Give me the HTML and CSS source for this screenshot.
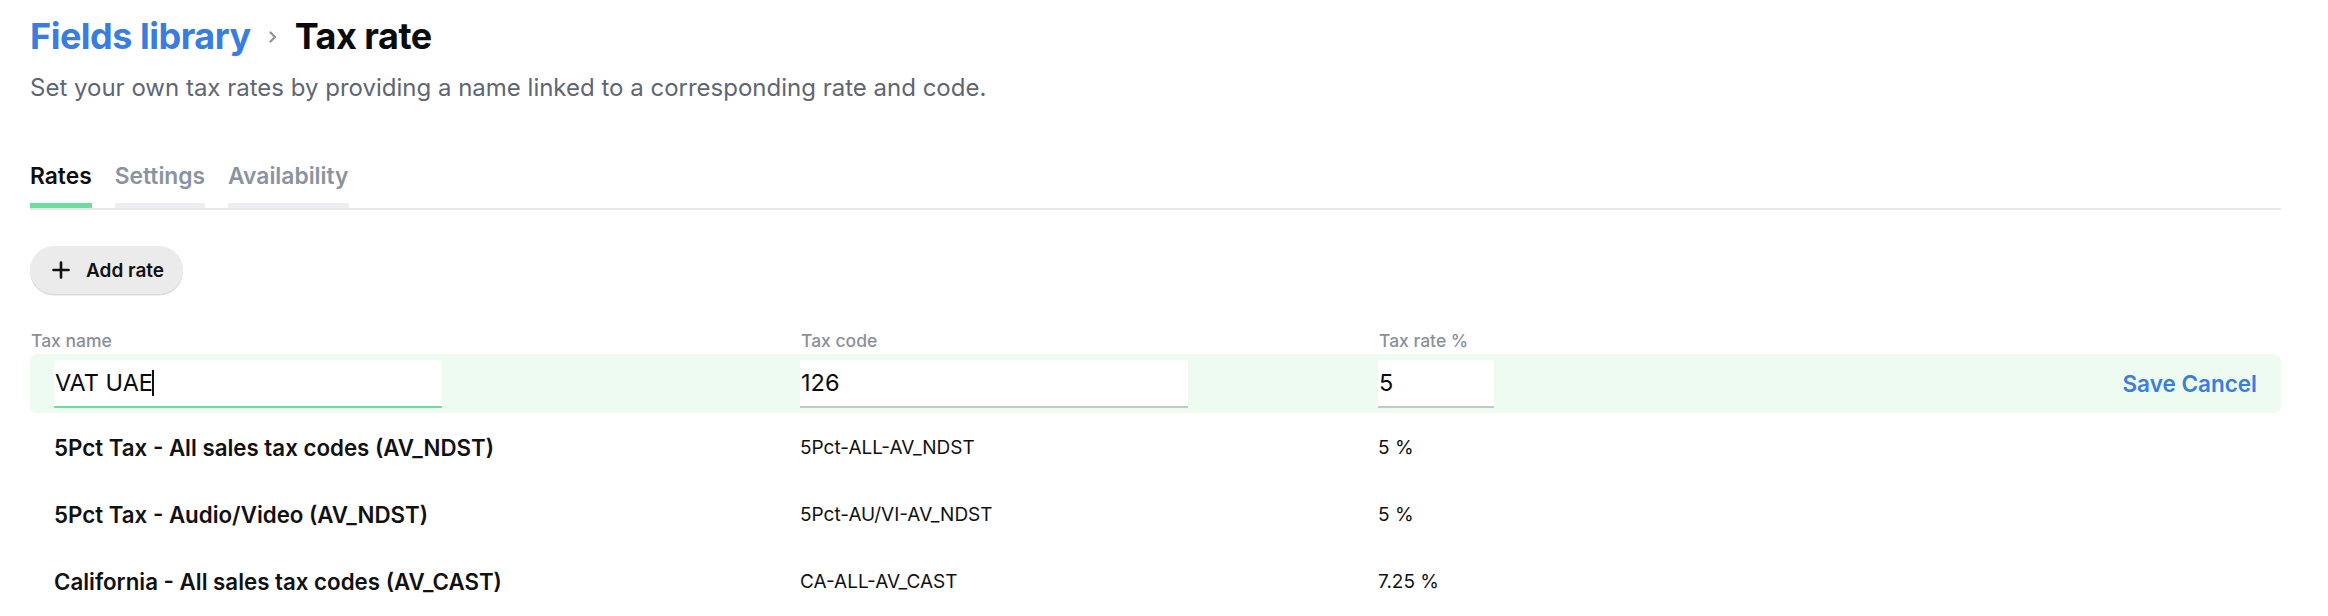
FILE: index.html
```html
<!DOCTYPE html>
<html lang="en">
<head>
<meta charset="utf-8">
<title>Tax rate</title>
<link rel="stylesheet" href="styles.css">
</head>
<body>
<div class="page">
  <header class="head">
    <h1 class="crumbs">
      <span class="crumb-link">Fields library</span>
      <svg class="chev" width="10" height="16" viewBox="0 0 10 16"><path d="M2.5 3.5 L7 8 L2.5 12.5" fill="none" stroke="#8d929b" stroke-width="2.2" stroke-linecap="round" stroke-linejoin="round"/></svg>
      <span class="crumb-current">Tax rate</span>
    </h1>
    <p class="subtitle">Set your own tax rates by providing a name linked to a corresponding rate and code.</p>
  </header>

  <nav class="tabs">
    <div class="tab active">Rates</div>
    <div class="tab">Settings</div>
    <div class="tab">Availability</div>
  </nav>

  <div class="toolbar">
    <button class="add-btn">
      <svg width="18" height="18" viewBox="0 0 18 18"><path d="M9 1.5 V16.5 M1.5 9 H16.5" stroke="#111" stroke-width="2.6" stroke-linecap="round"/></svg>
      <span>Add rate</span>
    </button>
  </div>

  <div class="table">
    <div class="thead">
      <div>Tax name</div>
      <div>Tax code</div>
      <div>Tax rate %</div>
    </div>

    <div class="row edit">
      <div class="field w-name active-field"><span>VAT UAE</span><span class="caret"></span></div>
      <div class="field w-code"><span>126</span></div>
      <div class="cell-rate">
        <div class="field w-rate"><span>5</span></div>
        <div class="actions"><span>Save</span> <span>Cancel</span></div>
      </div>
    </div>

    <div class="rows">
      <div class="row">
        <div class="name">5Pct Tax - All sales tax codes (AV_NDST)</div>
        <div class="code">5Pct-ALL-AV_NDST</div>
        <div class="code">5 %</div>
      </div>
      <div class="row">
        <div class="name">5Pct Tax - Audio/Video (AV_NDST)</div>
        <div class="code">5Pct-AU/VI-AV_NDST</div>
        <div class="code">5 %</div>
      </div>
      <div class="row">
        <div class="name">California - All sales tax codes (AV_CAST)</div>
        <div class="code">CA-ALL-AV_CAST</div>
        <div class="code">7.25 %</div>
      </div>
    </div>
  </div>
</div>
</body>
</html>
```

FILE: styles.css
```css
* { box-sizing: border-box; }
html, body { margin: 0; padding: 0; background: #fff; }
body {
  font-family: Inter, "Noto Sans", "Liberation Sans", sans-serif;
  color: #111;
  overflow: hidden;
}
.page {
  padding: 14px 47px 0 30px;
}
.crumbs {
  margin: 0;
  display: flex;
  align-items: center;
  gap: 17px;
  font-size: 36px;
  line-height: 44px;
  font-weight: 700;
  letter-spacing: -0.5px;
}
.crumb-link { color: #3b7ddd; }
.crumb-current { color: #0b0b0b; }
.chev { margin-top: 2px; }
.subtitle {
  margin: 15px 0 0;
  font-size: 24px;
  line-height: 30px;
  color: #5f6672;
}
.tabs {
  margin-top: 59px;
  display: flex;
  gap: 23px;
  border-bottom: 2px solid #e8e8e8;
}
.tab {
  font-size: 22.8px;
  line-height: 28px;
  font-weight: 600;
  color: #8b93a0;
  padding-bottom: 13px;
  border-bottom: 5px solid #eceef1;
}
.tab.active {
  color: #0d0d0d;
  border-bottom-color: #6ddc9e;
}
.toolbar {
  margin-top: 36px;
  display: flex;
}
.add-btn {
  display: flex;
  align-items: center;
  gap: 16px;
  height: 48px;
  padding: 0 19px 0 22px;
  border: none;
  border-radius: 24px;
  background: #ebebeb;
  box-shadow: 0 1.5px 0 #dcdcdc;
  font-family: inherit;
  font-size: 19px;
  font-weight: 600;
  color: #111;
}
.table { margin-top: 37px; }
.thead {
  display: grid;
  grid-template-columns: 770px 578px 1fr;
  font-size: 17.5px;
  line-height: 20px;
  font-weight: 500;
  color: #8a909b;
  padding-left: 1px;
}
.row {
  display: grid;
  grid-template-columns: 746px 578px 1fr;
  align-items: center;
  padding: 0 24px;
  height: 67px;
}
.row.edit {
  margin-top: 3px;
  height: 59px;
  background: #eefbf0;
  border-radius: 7px;
}
.rows { padding-top: 1px; }
.field {
  height: 48px;
  background: #fff;
  border-bottom: 2px solid #c4c7cc;
  display: flex;
  align-items: center;
  font-size: 23.5px;
  color: #0a0a0a;
  padding-left: 1px;
}
.active-field { border-bottom-color: #6ddc9e; }
.w-name { width: 388px; }
.w-code { width: 388px; }
.w-rate { width: 116px; }
.caret {
  width: 2px;
  height: 26px;
  background: #111;
  margin-left: -1px;
}
.cell-rate {
  display: flex;
  align-items: center;
  justify-content: space-between;
}
.actions {
  font-size: 22.5px;
  font-weight: 600;
  color: #3b7ddd;
}
.name {
  font-size: 22.3px;
  font-weight: 600;
  color: #111;
}
.code {
  font-size: 19px;
  color: #111;
}
```
